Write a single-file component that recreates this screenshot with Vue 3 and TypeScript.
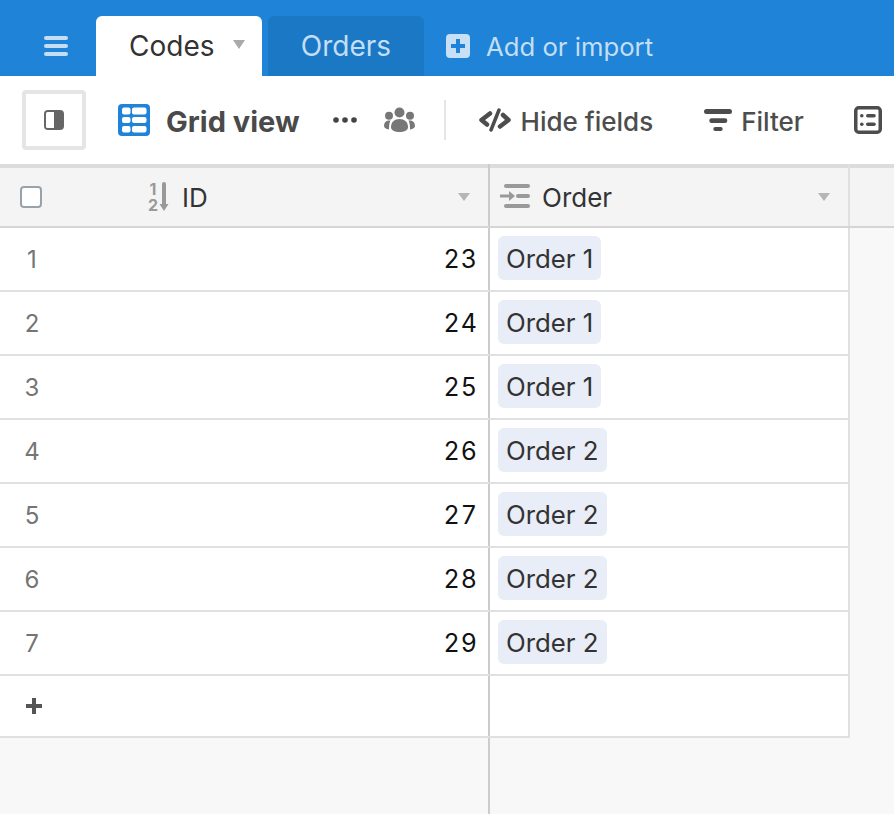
<script setup lang="ts">
interface Row {
  num: number;
  id: number;
  order: string;
}

const rows: Row[] = [
  { num: 1, id: 23, order: 'Order 1' },
  { num: 2, id: 24, order: 'Order 1' },
  { num: 3, id: 25, order: 'Order 1' },
  { num: 4, id: 26, order: 'Order 2' },
  { num: 5, id: 27, order: 'Order 2' },
  { num: 6, id: 28, order: 'Order 2' },
  { num: 7, id: 29, order: 'Order 2' },
];
</script>

<template>
  <div class="app">
    <header class="topbar">
      <button class="menu-btn" aria-label="Menu">
        <svg width="24" height="20" viewBox="0 0 24 20">
          <rect y="0" width="24" height="4" rx="2" />
          <rect y="8" width="24" height="4" rx="2" />
          <rect y="16" width="24" height="4" rx="2" />
        </svg>
      </button>
      <div class="tab tab-active">
        <span>Codes</span>
        <svg class="tab-caret" width="12" height="9" viewBox="0 0 12 9"><path d="M0 0h12L6 9z" /></svg>
      </div>
      <div class="tab tab-other">Orders</div>
      <div class="add">
        <svg width="24" height="24" viewBox="0 0 24 24">
          <rect width="24" height="24" rx="4" fill="#c7e0f6" />
          <path d="M10 5h4v5h5v4h-5v5h-4v-5H5v-4h5z" fill="#1f84d8" />
        </svg>
        <span>Add or import</span>
      </div>
    </header>

    <div class="toolbar">
      <button class="sidebar-btn" aria-label="Toggle sidebar">
        <svg width="20" height="20" viewBox="0 0 20 20">
          <rect width="20" height="20" rx="4" fill="#666" />
          <path d="M3.500 2H10v16H3.500A1.500 1.500 0 0 1 2 16.500v-13A1.500 1.500 0 0 1 3.500 2z" fill="#fff" />
        </svg>
      </button>
      <div class="view-name">
        <svg width="32" height="32" viewBox="0 0 32 32">
          <rect width="32" height="32" rx="4" fill="#1f84d8" />
          <rect x="4" y="3.500" width="8.500" height="7" rx="2" fill="#fff" />
          <rect x="14" y="3.500" width="14.500" height="7" rx="2" fill="#fff" />
          <rect x="4" y="13" width="8.500" height="6" rx="2" fill="#fff" />
          <rect x="14" y="13" width="14.500" height="6" rx="2" fill="#fff" />
          <rect x="4" y="22" width="8.500" height="6.500" rx="2" fill="#fff" />
          <rect x="14" y="22" width="14.500" height="6.500" rx="2" fill="#fff" />
        </svg>
        <span>Grid view</span>
      </div>
      <svg class="dots" width="24" height="6" viewBox="0 0 24 6" fill="#444">
        <circle cx="3" cy="3" r="2.800" />
        <circle cx="12" cy="3" r="2.800" />
        <circle cx="21" cy="3" r="2.800" />
      </svg>
      <svg class="people" width="32" height="26" viewBox="0 0 32 26" fill="#777">
        <circle cx="15.500" cy="5.500" r="5" />
        <circle cx="5" cy="8.700" r="4" />
        <circle cx="26" cy="8.700" r="4" />
        <path d="M7 20c0-5 3.500-8 8.500-8s8.500 3 8.500 8c0 3.500-3.500 5-8.500 5S7 23.500 7 20z" />
        <path d="M0 19c0-3 1.500-5 4-5.500h2.500C5.500 15.500 5 18 5 22.500 2 22 0 21 0 19z" />
        <path d="M31 19c0-3-1.500-5-4-5.500h-2.500c1 2 1.500 4.500 1.500 9 3-.5 5-1.500 5-3.500z" />
      </svg>
      <div class="divider"></div>
      <div class="tool tool-hide">
        <svg width="32" height="24" viewBox="0 0 32 24" fill="none" stroke="#4d4d4d" stroke-linecap="round" stroke-linejoin="round">
          <path d="M11 5.500 2.500 12l5.500 4.500" stroke-width="4.500" />
          <path d="M24 7l5.500 5-8.500 6.500" stroke-width="4.500" />
          <path d="M20 2 12 22" stroke-width="3.500" />
        </svg>
        <span>Hide fields</span>
      </div>
      <div class="tool tool-filter">
        <svg width="28" height="22" viewBox="0 0 28 22" fill="#4d4d4d">
          <rect width="28" height="5" rx="2.500" />
          <rect x="5.300" y="9.300" width="18" height="4.700" rx="2.300" />
          <rect x="9.300" y="18" width="9.400" height="4" rx="2" />
        </svg>
        <span>Filter</span>
      </div>
      <div class="tool tool-group">
        <svg width="28" height="28" viewBox="0 0 28 28">
          <rect x="1.750" y="1.750" width="24.500" height="24.500" rx="3" fill="none" stroke="#4d4d4d" stroke-width="3.500" />
          <circle cx="7.800" cy="9.800" r="1.800" fill="#4d4d4d" />
          <circle cx="7.800" cy="18.200" r="1.800" fill="#4d4d4d" />
          <rect x="12" y="8" width="9.800" height="3.600" rx="1.800" fill="#4d4d4d" />
          <rect x="12" y="16.400" width="9.800" height="3.600" rx="1.800" fill="#4d4d4d" />
        </svg>
        <span>Group</span>
      </div>
    </div>

    <main class="grid-area">
      <div class="table">
        <div class="tr thead">
          <div class="td col-id">
            <span class="check"></span>
            <span class="id-head">
              <span class="sort-nums"><span>1</span><span>2</span></span>
              <svg class="sort-arrow" width="10" height="30" viewBox="0 0 10 30">
                <path d="M5 2v21" stroke="#999" stroke-width="4" stroke-linecap="round" fill="none" />
                <path d="M.5 22h9L5 29z" fill="#999" />
              </svg>
              <span class="id-title">ID</span>
            </span>
            <svg class="caret" width="12" height="8" viewBox="0 0 12 8"><path d="M0 0h12L6 8z" /></svg>
          </div>
          <div class="td col-order">
            <svg class="order-icon" width="30" height="24" viewBox="0 0 30 24" fill="#999">
              <rect x="4" y="0" width="26" height="4" rx="2" />
              <rect x="16" y="10" width="14" height="4" rx="2" />
              <rect x="4" y="20" width="26" height="4" rx="2" />
              <rect x="0" y="10.500" width="10" height="3" />
              <path d="M9 7l6 5-6 5z" />
            </svg>
            <span class="order-title">Order</span>
            <svg class="caret" width="12" height="8" viewBox="0 0 12 8"><path d="M0 0h12L6 8z" /></svg>
          </div>
        </div>

        <div v-for="row in rows" :key="row.num" class="tr">
          <div class="td col-id">
            <span class="row-num">{{ row.num }}</span>
            <span class="id-value">{{ row.id }}</span>
          </div>
          <div class="td col-order">
            <span class="pill">{{ row.order }}</span>
          </div>
        </div>

        <div class="tr add-row">
          <div class="td col-id">
            <svg class="plus" width="16" height="16" viewBox="0 0 16 16"><path d="M6 0h4v6h6v4h-6v6H6v-6H0V6h6z" fill="#555" /></svg>
          </div>
          <div class="td col-order"></div>
        </div>
      </div>
      <div class="bottom-fill">
        <div class="fill-left"></div>
      </div>
    </main>
  </div>
</template>

<style>
html,
body {
  margin: 0;
  height: 100%;
  overflow: hidden;
}
</style>

<style scoped>
.app {
  width: 894px;
  height: 814px;
  overflow: hidden;
  display: flex;
  flex-direction: column;
  font-family: Inter, "Liberation Sans", sans-serif;
  background: #f8f8f8;
}

.topbar {
  height: 76px;
  flex: none;
  background: #1f84d8;
  display: flex;
  align-items: flex-end;
}

.menu-btn {
  width: 96px;
  height: 60px;
  padding: 0 0 0 44px;
  border: none;
  background: none;
  display: flex;
  align-items: center;
  box-sizing: border-box;
}

.menu-btn svg {
  fill: #c4def5;
}

.tab {
  height: 60px;
  box-sizing: border-box;
  border-radius: 6px 6px 0 0;
  font-size: 28px;
  display: flex;
  align-items: center;
}

.tab-active {
  width: 166px;
  padding-left: 33px;
  background: #fff;
  color: #333;
}

.tab-caret {
  margin-left: 18px;
  margin-bottom: 3px;
  fill: #aaa;
}

.tab-other {
  width: 156px;
  margin-left: 6px;
  justify-content: center;
  background: #1b78c5;
  color: #c4def5;
}

.add {
  height: 60px;
  margin-left: 22px;
  display: flex;
  align-items: center;
  gap: 16px;
  font-size: 25.700px;
  color: #c4def5;
}

.toolbar {
  height: 88px;
  flex: none;
  box-sizing: border-box;
  background: #fff;
  display: flex;
  align-items: center;
  padding-left: 22px;
  white-space: nowrap;
  overflow: hidden;
  color: #4d4d4d;
  font-size: 26px;
  font-weight: 500;
}

.sidebar-btn {
  width: 64px;
  height: 60px;
  flex: none;
  box-sizing: border-box;
  background: #fff;
  border: 4px solid #e5e5e5;
  border-radius: 4px;
  padding: 0;
  display: flex;
  align-items: center;
  justify-content: center;
}

.view-name {
  display: flex;
  align-items: center;
  gap: 16px;
  margin-left: 32px;
  font-size: 29px;
  font-weight: 700;
  color: #4a4a4a;
}

.view-name span,
.tool span {
  padding-top: 2px;
}

.dots {
  margin-left: 33px;
  flex: none;
}

.people {
  margin-left: 27px;
  flex: none;
}

.divider {
  width: 2px;
  height: 40px;
  flex: none;
  margin-left: 28px;
  background: #e5e5e5;
}

.tool {
  display: flex;
  align-items: center;
  flex: none;
}

.tool-hide {
  margin-left: 33px;
  gap: 10px;
}

.tool-filter {
  margin-left: 51px;
  gap: 9px;
}

.tool-group {
  margin-left: 50px;
  gap: 12px;
}

.grid-area {
  flex: 1;
  min-height: 0;
  display: flex;
  flex-direction: column;
  border-top: 4px solid #dcdcdc;
}

.table {
  width: 850px;
  background: #f4f4f4;
}

.tr {
  display: flex;
  height: 64px;
  box-sizing: border-box;
  background: #fff;
  border-bottom: 2px solid #dde1e4;
}

.thead {
  height: 60px;
  width: 894px;
  background: #f4f4f4;
  border-bottom-color: #d5d5d5;
}

.add-row {
  height: 62px;
}

.td {
  height: 100%;
  box-sizing: border-box;
  display: flex;
  align-items: center;
}

.col-id {
  width: 490px;
  flex: none;
  border-right: 2px solid #ccc;
  padding-right: 10px;
  position: relative;
}

.col-order {
  width: 360px;
  flex: none;
  border-right: 2px solid #dde1e4;
  padding-left: 8px;
  position: relative;
}

.thead .col-id,
.thead .col-order {
  height: calc(100% + 4px);
  margin-top: -4px;
  padding-top: 4px;
}

.check {
  width: 22px;
  height: 22px;
  margin-left: 20px;
  box-sizing: border-box;
  background: #fff;
  border: 2px solid #98a2aa;
  border-radius: 4px;
}

.id-head {
  margin-left: 106px;
  display: flex;
  align-items: center;
  font-size: 26px;
  color: #333;
}

.sort-nums {
  width: 10px;
  display: flex;
  flex-direction: column;
  align-items: center;
  font-size: 16px;
  line-height: 16px;
  font-weight: 700;
  color: #999;
}

.sort-arrow {
  margin-left: 1px;
}

.id-title {
  margin-left: 13px;
}

.caret {
  margin-left: auto;
  fill: #b5b5b5;
}

.col-id .caret {
  margin-right: 8px;
}

.col-order .caret {
  margin-right: 18px;
}

.thead .col-order {
  padding-left: 10px;
}

.order-icon {
  flex: none;
  margin-bottom: 2px;
}

.order-title {
  margin-left: 12px;
  font-size: 26px;
  color: #333;
}

.row-num {
  width: 64px;
  text-align: center;
  font-size: 24px;
  color: #757575;
}

.id-value {
  margin-left: auto;
  font-size: 25px;
  letter-spacing: 1px;
  font-variant-numeric: tabular-nums;
  color: #111;
}

.pill {
  height: 44px;
  margin-bottom: 2px;
  padding: 0 8px;
  display: flex;
  align-items: center;
  background: #e9edf7;
  border-radius: 6px;
  font-size: 25.800px;
  color: #333;
}

.plus {
  margin-left: 26px;
}

.bottom-fill {
  flex: 1;
  min-height: 0;
  background: #f8f8f8;
}

.fill-left {
  width: 490px;
  height: 100%;
  box-sizing: border-box;
  border-right: 2px solid #ccc;
}
</style>
